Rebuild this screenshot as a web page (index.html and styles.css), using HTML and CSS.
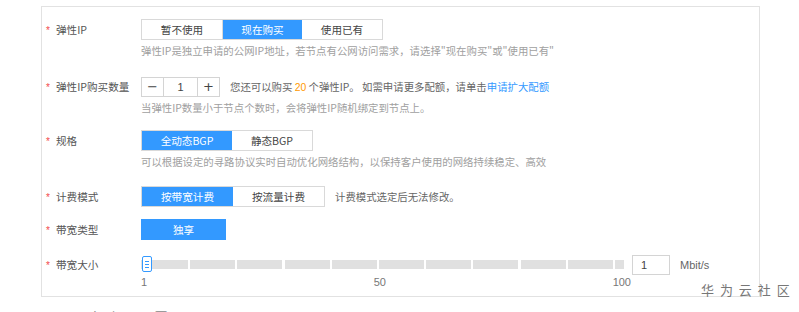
FILE: index.html
```html
<!DOCTYPE html>
<html lang="zh-CN">
<head>
  <meta charset="UTF-8" />
  <title>弹性IP配置</title>
  <link rel="stylesheet" href="styles.css">
</head>
<body>

  <div class="page">
    <div class="form-box">

      <!-- 弹性IP -->
      <div class="item gap-16">
        <div class="label"><span class="req">*</span>弹性IP</div>
        <div class="field">
          <div class="btn-group">
            <span class="opt w80">暂不使用</span>
            <span class="opt w80 active">现在购买</span>
            <span class="opt w80">使用已有</span>
          </div>
          <div class="hint">弹性IP是独立申请的公网IP地址，若节点有公网访问需求，请选择"现在购买"或"使用已有"</div>
        </div>
      </div>

      <!-- 购买数量 -->
      <div class="item gap-13">
        <div class="label"><span class="req">*</span>弹性IP购买数量</div>
        <div class="field">
          <div class="ctrl-row">
            <div class="stepper">
              <span class="step-btn">−</span>
              <span class="step-val">1</span>
              <span class="step-btn">+</span>
            </div>
            <span class="note">您还可以购买 <em class="num">20</em> 个弹性IP。 如需申请更多配额，请单击<a class="link" href="#">申请扩大配额</a></span>
          </div>
          <div class="hint">当弹性IP数量小于节点个数时，会将弹性IP随机绑定到节点上。</div>
        </div>
      </div>

      <!-- 规格 -->
      <div class="item">
        <div class="label"><span class="req">*</span>规格</div>
        <div class="field">
          <div class="btn-group">
            <span class="opt w90 active">全动态BGP</span>
            <span class="opt w80">静态BGP</span>
          </div>
          <div class="hint">可以根据设定的寻路协议实时自动优化网络结构，以保持客户使用的网络持续稳定、高效</div>
        </div>
      </div>

      <!-- 计费模式 -->
      <div class="item gap-12">
        <div class="label"><span class="req">*</span>计费模式</div>
        <div class="field">
          <div class="ctrl-row">
            <div class="btn-group">
              <span class="opt w91 active">按带宽计费</span>
              <span class="opt w91">按流量计费</span>
            </div>
            <span class="note">计费模式选定后无法修改。</span>
          </div>
        </div>
      </div>

      <!-- 带宽类型 -->
      <div class="item gap-14">
        <div class="label"><span class="req">*</span>带宽类型</div>
        <div class="field">
          <div class="btn-group plain">
            <span class="opt w85 active">独享</span>
          </div>
        </div>
      </div>

      <!-- 带宽大小 -->
      <div class="item">
        <div class="label"><span class="req">*</span>带宽大小</div>
        <div class="field">
          <div class="ctrl-row">
            <div class="slider">
              <span class="handle"><i></i><i></i><i></i></span>
            </div>
            <span class="size-input">1</span>
            <span class="unit">Mbit/s</span>
          </div>
          <div class="scale">
            <span>1</span>
            <span>50</span>
            <span>100</span>
          </div>
        </div>
      </div>

    </div>

    <div class="next-title">高级配置</div>
    <div class="watermark">华 为 云 社 区</div>
  </div>

</body>
</html>
```

FILE: styles.css
```css
body {
  margin: 0;
  background: #fff;
  font-family: "Noto Sans CJK SC", sans-serif;
  font-size: 10.6px;
  color: #555;
}
.page {
  position: relative;
  width: 799px;
  height: 312px;
  overflow: hidden;
}
.form-box {
  box-sizing: border-box;
  margin: 6px 0 0 41px;
  width: 719px;
  height: 291px;
  border: 1px solid #e2e2e2;
  padding: 12px 0 0 4px;
}
.item {
  display: flex;
  margin-bottom: 15px;
}
.gap-12 { margin-bottom: 12px; }
.gap-13 { margin-bottom: 13px; }
.gap-14 { margin-bottom: 14px; }
.gap-16 { margin-bottom: 16px; }
.label {
  width: 95px;
  height: 21px;
  line-height: 21px;
  flex-shrink: 0;
  color: #555;
}
.req {
  display: inline-block;
  width: 10px;
  color: #f24a4a;
  font-family: "Liberation Sans", sans-serif;
  font-size: 10px;
}
.field {
  display: flex;
  flex-direction: column;
}
.ctrl-row {
  display: flex;
  align-items: center;
  height: 21px;
}
.btn-group {
  display: flex;
  height: 21px;
  box-sizing: border-box;
  border: 1px solid #d9d9d9;
  width: max-content;
}
.btn-group.plain {
  border: none;
}
.opt {
  display: block;
  box-sizing: border-box;
  text-align: center;
  line-height: 19px;
  color: #444;
  background: #fff;
}
.plain .opt {
  line-height: 21px;
}
.opt.active {
  background: #3399ff;
  color: #fff;
}
.w80 { width: 80px; }
.w85 { width: 85px; }
.w90 { width: 90px; }
.w91 { width: 91px; }
.btn-group .w80 + .w80 {
  border-left: 1px solid #d9d9d9;
}
.btn-group .active + .opt {
  border-left: none;
}
.hint {
  margin-top: 1px;
  line-height: 19px;
  font-size: 10.4px;
  color: #a0a0a0;
  white-space: nowrap;
}
.note {
  margin-left: 10px;
  font-size: 10.4px;
  color: #666;
  white-space: nowrap;
}
.num {
  font-style: normal;
  color: #ff9900;
  font-family: "Liberation Sans", sans-serif;
}
.link {
  color: #3399ff;
  text-decoration: none;
}
.stepper {
  display: flex;
  height: 20px;
  box-sizing: border-box;
  border: 1px solid #d4d4d4;
}
.step-btn,
.step-val {
  display: block;
  text-align: center;
  line-height: 18px;
  color: #444;
}
.step-btn {
  width: 21px;
  font-family: "DejaVu Sans", sans-serif;
  font-size: 13px;
}
.step-val {
  width: 33px;
  border-left: 1px solid #d4d4d4;
  border-right: 1px solid #d4d4d4;
  font-family: "Liberation Sans", sans-serif;
  font-size: 11px;
}
.slider {
  position: relative;
  width: 483px;
  height: 9px;
  background: repeating-linear-gradient(to right, #e0e0e0 0, #e0e0e0 45px, #fff 45px, #fff 47.2px);
  background-position: 2px 0;
}
.handle {
  position: absolute;
  left: 1px;
  top: -4px;
  box-sizing: border-box;
  width: 10px;
  height: 16px;
  border: 1px solid #3399ff;
  border-radius: 2px;
  background: #fff;
  display: flex;
  flex-direction: column;
  justify-content: center;
  align-items: center;
  gap: 2px;
}
.handle i {
  display: block;
  width: 4px;
  height: 1px;
  background: #3399ff;
}
.size-input {
  display: block;
  margin-left: 8px;
  box-sizing: border-box;
  width: 38px;
  height: 20px;
  border: 1px solid #d4d4d4;
  padding-left: 8px;
  line-height: 18px;
  font-family: "Liberation Sans", sans-serif;
  font-size: 11px;
  color: #444;
}
.unit {
  margin-left: 10px;
  font-family: "Liberation Sans", sans-serif;
  font-size: 11px;
  color: #666;
}
.scale {
  display: flex;
  justify-content: space-between;
  width: 490px;
  margin-top: 1px;
  line-height: 12px;
  font-family: "Liberation Sans", sans-serif;
  font-size: 11px;
  color: #777;
}
.next-title {
  margin: 10px 0 0 88px;
  font-size: 14px;
  line-height: 20px;
  color: #888;
  letter-spacing: 8px;
}
.watermark {
  position: absolute;
  left: 701px;
  top: 282px;
  font-size: 13px;
  line-height: 16px;
  color: #777;
  letter-spacing: 1.5px;
}
```
